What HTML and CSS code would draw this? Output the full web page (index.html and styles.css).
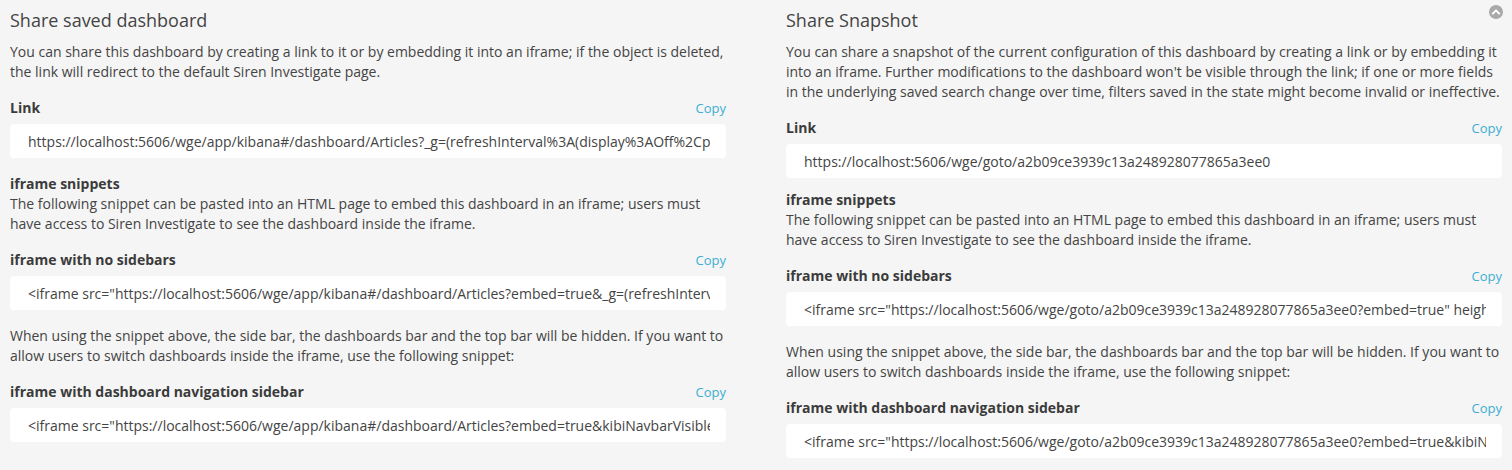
FILE: index.html
```html
<!DOCTYPE html>
<html lang="en">
<head>
<meta charset="utf-8">
<title>Share</title>
<link rel="stylesheet" href="styles.css">
</head>
<body>
<div class="page">
  <section class="col">
    <h2 class="title">Share saved dashboard</h2>
    <p class="text">You can share this dashboard by creating a link to it or by embedding it into an iframe; if the object is deleted, the link will redirect to the default Siren Investigate page.</p>
    <div class="field-head"><span class="label">Link</span><a class="copy" href="#">Copy</a></div>
    <input class="url" type="text" readonly value="https://localhost:5606/wge/app/kibana#/dashboard/Articles?_g=(refreshInterval%3A(display%3AOff%2Cpause%3A!f%2Cvalue%3A0)%2Ctime%3A(from%3Anow-15m%2Cmode%3Aquick%2Cto%3Anow))">
    <div class="label label-block">iframe snippets</div>
    <p class="text text-tight">The following snippet can be pasted into an HTML page to embed this dashboard in an iframe; users must have access to Siren Investigate to see the dashboard inside the iframe.</p>
    <div class="field-head"><span class="label">iframe with no sidebars</span><a class="copy" href="#">Copy</a></div>
    <input class="url" type="text" readonly value='&lt;iframe src="https://localhost:5606/wge/app/kibana#/dashboard/Articles?embed=true&amp;_g=(refreshInterval%3A(display%3AOff%2Cpause%3A!f%2Cvalue%3A0))" height="600" width="800"&gt;&lt;/iframe&gt;'>
    <p class="text text-after">When using the snippet above, the side bar, the dashboards bar and the top bar will be hidden. If you want to allow users to switch dashboards inside the iframe, use the following snippet:</p>
    <div class="field-head"><span class="label">iframe with dashboard navigation sidebar</span><a class="copy" href="#">Copy</a></div>
    <input class="url" type="text" readonly value='&lt;iframe src="https://localhost:5606/wge/app/kibana#/dashboard/Articles?embed=true&amp;kibiNavbarVisible=true&amp;_g=(refreshInterval%3A(display%3AOff))" height="600" width="800"&gt;&lt;/iframe&gt;'>
  </section>
  <section class="col">
    <h2 class="title">Share Snapshot</h2>
    <p class="text">You can share a snapshot of the current configuration of this dashboard by creating a link or by embedding it into an iframe. Further modifications to the dashboard won't be visible through the link; if one or more fields in the underlying saved search change over time, filters saved in the state might become invalid or ineffective.</p>
    <div class="field-head"><span class="label">Link</span><a class="copy" href="#">Copy</a></div>
    <input class="url" type="text" readonly value="https://localhost:5606/wge/goto/a2b09ce3939c13a248928077865a3ee0">
    <div class="label label-block label-snug">iframe snippets</div>
    <p class="text text-tight">The following snippet can be pasted into an HTML page to embed this dashboard in an iframe; users must have access to Siren Investigate to see the dashboard inside the iframe.</p>
    <div class="field-head"><span class="label">iframe with no sidebars</span><a class="copy" href="#">Copy</a></div>
    <input class="url" type="text" readonly value='&lt;iframe src="https://localhost:5606/wge/goto/a2b09ce3939c13a248928077865a3ee0?embed=true" height="600" width="800"&gt;&lt;/iframe&gt;'>
    <p class="text text-after">When using the snippet above, the side bar, the dashboards bar and the top bar will be hidden. If you want to allow users to switch dashboards inside the iframe, use the following snippet:</p>
    <div class="field-head"><span class="label">iframe with dashboard navigation sidebar</span><a class="copy" href="#">Copy</a></div>
    <input class="url" type="text" readonly value='&lt;iframe src="https://localhost:5606/wge/goto/a2b09ce3939c13a248928077865a3ee0?embed=true&amp;kibiNavbarVisible=true" height="600" width="800"&gt;&lt;/iframe&gt;'>
  </section>
  <button class="collapse" type="button" aria-label="Collapse">
    <svg width="14" height="14" viewBox="0 0 14 14"><circle cx="7" cy="7" r="7" fill="#a9a9a9"/><path d="M3.8 8.6 L7 5.4 L10.2 8.6" fill="none" stroke="#fff" stroke-width="2" stroke-linecap="round" stroke-linejoin="round"/></svg>
  </button>
</div>
</body>
</html>
```

FILE: styles.css
```css
html, body {
  margin: 0;
  padding: 0;
  background: #f5f5f5;
}

body {
  font-family: "Open Sans", "Liberation Sans", sans-serif;
  color: #444;
  font-size: 14px;
  line-height: 20px;
}

.page {
  position: relative;
  display: grid;
  grid-template-columns: 716px 716px;
  column-gap: 60px;
  padding: 0 10px;
  height: 470px;
  box-sizing: border-box;
}

.col {
  display: flex;
  flex-direction: column;
}

.title {
  margin: 8px 0 0;
  font-size: 18px;
  line-height: 24px;
  font-weight: 400;
  color: #444;
}

.text {
  margin: 10px 0 0;
}

.text-tight {
  margin-top: 0;
}

.text-after {
  margin-top: 16px;
}

.field-head {
  display: flex;
  justify-content: space-between;
  align-items: center;
  margin-top: 16px;
  margin-bottom: 6px;
}

.label {
  font-weight: 700;
  color: #3b3b3b;
}

.label-block {
  margin-top: 16px;
}

.label-snug {
  margin-top: 12px;
}

.copy {
  font-size: 13px;
  color: #3caed2;
  text-decoration: none;
}

.url {
  display: block;
  width: 100%;
  height: 34px;
  box-sizing: border-box;
  border: none;
  border-radius: 4px;
  background: #fff;
  padding: 0 16px 0 18px;
  margin: 0;
  font-family: "Open Sans", "Liberation Sans", sans-serif;
  font-size: 14px;
  color: #444;
  outline: none;
}

.collapse {
  position: absolute;
  top: 5px;
  right: 9px;
  width: 14px;
  height: 14px;
  padding: 0;
  border: none;
  background: none;
  line-height: 0;
}
```
